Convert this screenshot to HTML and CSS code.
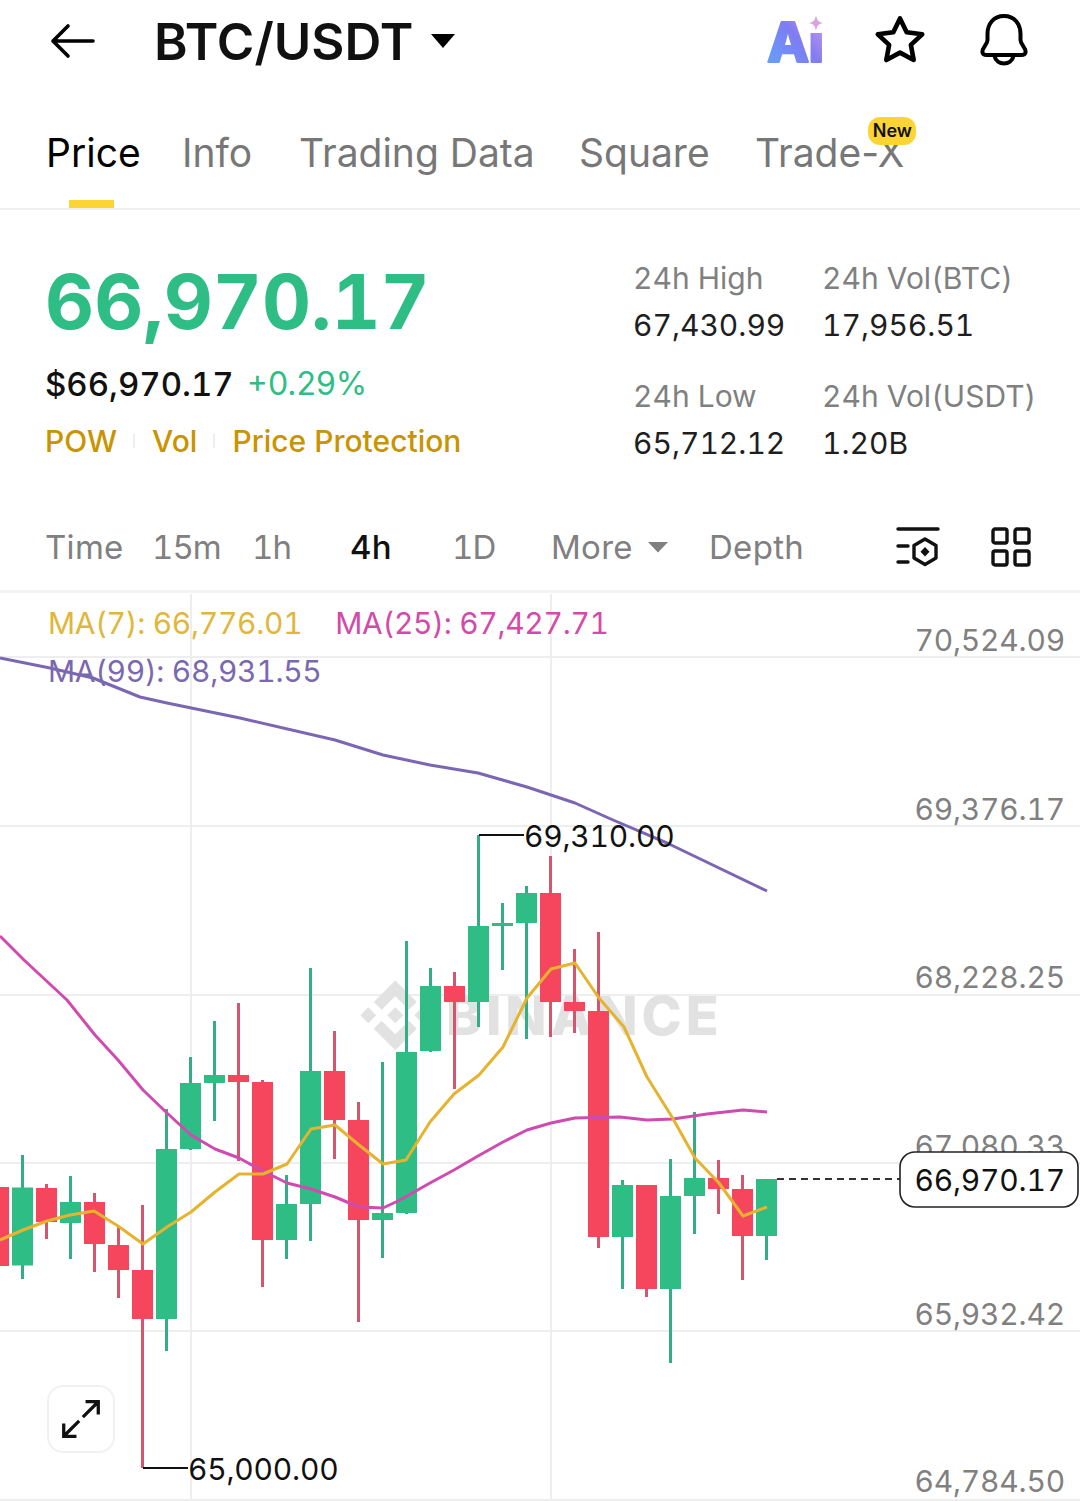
FILE: index.html
```html
<!DOCTYPE html>
<html lang="en">
<head>
  <meta charset="UTF-8">
  <meta name="viewport" content="width=device-width, initial-scale=1.0">
  <link rel="stylesheet" href="styles.css">
  <title>BTC/USDT</title>
</head>
<body>
  <div id="app">
    <header class="topbar">
      <svg class="icon-back" viewBox="0 0 46 38"><path d="M3 19H43M18 4 3 19 18 34"/></svg>
      <h1 class="pair">BTC/USDT</h1>
      <svg class="icon-caret" viewBox="0 0 26 16"><path d="M1 1H25L13 15Z"/></svg>
      <svg class="icon-ai" viewBox="0 -8 64 70">
        <defs>
          <linearGradient id="aiFill" x1="0" y1="1" x2="1" y2="0">
            <stop offset="0" stop-color="#5fa8ff"/>
            <stop offset="0.55" stop-color="#7f7cf2"/>
            <stop offset="1" stop-color="#d59ce8"/>
          </linearGradient>
        </defs>
        <text class="ai-text" x="0" y="48" fill="url(#aiFill)" stroke="url(#aiFill)">Ai</text>
        <rect class="ai-mask" x="38" y="0" width="26" height="19"/>
        <path class="ai-spark" d="M49 1C50 6 51 8 56 9 51 10 50 12 49 17 48 12 47 10 42 9 47 8 48 6 49 1Z"/>
      </svg>
      <svg class="icon-star" viewBox="0 0 52 50"><path d="M26 4 32.2 16.8 46.6 18.8 36.1 28.6 38.7 42.6 26 35.8 13.3 42.6 15.9 28.6 5.4 18.8 19.8 16.8Z"/></svg>
      <svg class="icon-bell" viewBox="0 0 54 56"><path d="M27 3C16.5 3 10.5 11 10.5 21V27C10.5 32 4.5 35 5.5 39.5 6 41.5 7.5 42 9.500 42H44.500C46.500 42 48 41.500 48.500 39.500 49.500 35 43.500 32 43.500 27V21C43.500 11 37.500 3 27 3ZM17.500 43C19.500 53 34.500 53 36.500 43"/></svg>
    </header>

    <nav class="tabs">
      <a class="tab active">Price</a>
      <a class="tab">Info</a>
      <a class="tab">Trading Data</a>
      <a class="tab">Square</a>
      <a class="tab tab-new">Trade-X<span class="badge">New</span></a>
    </nav>

    <section class="summary">
      <div class="price-box">
        <div class="last-price">66,970.17</div>
        <div class="fiat-row"><span class="fiat">$66,970.17</span><span class="change">+0.29%</span></div>
        <div class="tags">
          <span>POW</span><i class="tag-sep"></i><span>Vol</span><i class="tag-sep"></i><span>Price Protection</span>
        </div>
      </div>
      <div class="stats">
        <div class="stat"><div class="stat-label">24h High</div><div class="stat-value">67,430.99</div></div>
        <div class="stat"><div class="stat-label">24h Vol(BTC)</div><div class="stat-value">17,956.51</div></div>
        <div class="stat"><div class="stat-label">24h Low</div><div class="stat-value">65,712.12</div></div>
        <div class="stat"><div class="stat-label">24h Vol(USDT)</div><div class="stat-value">1.20B</div></div>
      </div>
    </section>

    <div class="periods">
      <span>Time</span>
      <span class="num">15m</span>
      <span class="num">1h</span>
      <span class="current">4h</span>
      <span class="num">1D</span>
      <span class="more">More<svg class="icon-more" viewBox="0 0 20 12"><path d="M0 1H20L10 11.500Z"/></svg></span>
      <span>Depth</span>
      <svg class="icon-settings" viewBox="0 0 44 42">
        <path d="M2 3H42M2 20H12M2 36H12"/>
        <path d="M29 13 40 19.500V32L29 38.500 18 32V19.500Z"/>
        <path class="fill" d="M29 21 33.500 25.700 29 30.500 24.500 25.700Z"/>
      </svg>
      <svg class="icon-layout" viewBox="0 0 42 42">
        <rect x="3" y="3" width="14" height="14" rx="2"/>
        <rect x="25" y="3" width="14" height="14" rx="2"/>
        <rect x="3" y="25" width="14" height="14" rx="2"/>
        <rect x="25" y="25" width="14" height="14" rx="2"/>
      </svg>
    </div>

    <section class="chart">
      <svg class="chart-svg" viewBox="0 592 1080 909">
        <path class="grid" d="M0 657H1080M0 826H1080M0 994.500H1080M0 1163H1080M0 1331H1080M0 1499.500H1080M190.500 594V1500M550.500 594V1500"/>

        <g class="watermark">
          <path transform="translate(360 980) scale(.56)" d="M38.730 53.200 63 28.940 87.280 53.220 101.400 39.100 63 .7 24.610 39.090ZM.7 63 14.820 48.880 28.940 63 14.820 77.120ZM38.730 72.800 63 97.060 87.280 72.780 101.410 86.880 63 125.300 24.610 86.910ZM97.060 63 111.180 48.880 125.300 63 111.180 77.120ZM77.320 62.990 63 48.670 48.680 62.980 63 77.320Z"/>
          <text x="446" y="1035">BINANCE</text>
        </g>

        <g class="candles">
          <path class="wick down" d="M-1.500 1173V1280"/><rect class="body down" x="-12" y="1187" width="21" height="79"/>
          <path class="wick up" d="M22.500 1155V1279"/><rect class="body up" x="12" y="1187.500" width="21" height="78"/>
          <path class="wick down" d="M46.500 1184V1239"/><rect class="body down" x="36" y="1188" width="21" height="34"/>
          <path class="wick up" d="M70.500 1176V1259"/><rect class="body up" x="60" y="1202" width="21" height="21"/>
          <path class="wick down" d="M94.500 1193V1272"/><rect class="body down" x="84" y="1202" width="21" height="42"/>
          <path class="wick down" d="M118.500 1227V1298"/><rect class="body down" x="108" y="1245" width="21" height="25"/>
          <path class="wick down" d="M142.500 1205V1468"/><rect class="body down" x="132" y="1270" width="21" height="49"/>
          <path class="wick up" d="M166.500 1109V1351"/><rect class="body up" x="156" y="1149" width="21" height="170"/>
          <path class="wick up" d="M190.500 1057V1150"/><rect class="body up" x="180" y="1083" width="21" height="66"/>
          <path class="wick up" d="M214.500 1021V1121"/><rect class="body up" x="204" y="1075" width="21" height="8"/>
          <path class="wick down" d="M238.500 1003V1161"/><rect class="body down" x="228" y="1075" width="21" height="7"/>
          <path class="wick down" d="M262.500 1080V1287"/><rect class="body down" x="252" y="1082" width="21" height="158"/>
          <path class="wick up" d="M286.500 1175V1259"/><rect class="body up" x="276" y="1204" width="21" height="36"/>
          <path class="wick up" d="M310.500 968V1241"/><rect class="body up" x="300" y="1071" width="21" height="133"/>
          <path class="wick down" d="M334.500 1031V1159"/><rect class="body down" x="324" y="1071" width="21" height="49"/>
          <path class="wick down" d="M358.500 1102V1322"/><rect class="body down" x="348" y="1120" width="21" height="100"/>
          <path class="wick up" d="M382.500 1062V1258"/><rect class="body up" x="372" y="1213" width="21" height="7"/>
          <path class="wick up" d="M406.500 941V1214"/><rect class="body up" x="396" y="1052" width="21" height="161"/>
          <path class="wick up" d="M430.500 968V1052"/><rect class="body up" x="420" y="986" width="21" height="65"/>
          <path class="wick down" d="M454.500 972V1089"/><rect class="body down" x="444" y="986" width="21" height="16"/>
          <path class="wick up" d="M478.500 835V1027"/><rect class="body up" x="468" y="926" width="21" height="76"/>
          <path class="wick up" d="M502.500 903V970"/><rect class="body up" x="492" y="923" width="21" height="3"/>
          <path class="wick up" d="M526.500 886V1039"/><rect class="body up" x="516" y="893" width="21" height="30"/>
          <path class="wick down" d="M550.500 856V1037"/><rect class="body down" x="540" y="893" width="21" height="109"/>
          <path class="wick down" d="M574.500 949V1033"/><rect class="body down" x="564" y="1002" width="21" height="9"/>
          <path class="wick down" d="M598.500 932V1248"/><rect class="body down" x="588" y="1011" width="21" height="226"/>
          <path class="wick up" d="M622.500 1180V1289"/><rect class="body up" x="612" y="1185" width="21" height="52"/>
          <path class="wick down" d="M646.500 1185V1297"/><rect class="body down" x="636" y="1185" width="21" height="104"/>
          <path class="wick up" d="M670.500 1159V1363"/><rect class="body up" x="660" y="1196" width="21" height="93"/>
          <path class="wick up" d="M694.500 1112V1234"/><rect class="body up" x="684" y="1178" width="21" height="18"/>
          <path class="wick down" d="M718.500 1160V1214"/><rect class="body down" x="708" y="1178" width="21" height="11"/>
          <path class="wick down" d="M742.500 1175V1280"/><rect class="body down" x="732" y="1189" width="21" height="47"/>
          <path class="wick up" d="M766.500 1179V1260"/><rect class="body up" x="756" y="1179" width="21" height="57"/>
        </g>

        <polyline class="ma ma99" points="0,658 50,668 93,678 140,697 167,703 240,718 335,740 383,755 430,765 478,773 527,787 575,803 613,820 667,843 767,891"/>
        <polyline class="ma ma25" points="0,936 24,960 67,1000 95,1035 118,1060 143,1090 167,1113 191,1135 215,1149 239,1158 263,1171 287,1183 311,1189 335,1197 359,1207 383,1208 400,1200 430,1183 454,1170 478,1156 503,1142 527,1130 551,1123 575,1118 620,1117 647,1120 673,1119 707,1114 743,1110 767,1112"/>
        <polyline class="ma ma7" points="0,1240 23,1230 47,1221 70,1215 94,1211 118,1226 143,1244 167,1227 191,1212 215,1192 239,1174 263,1174 287,1164 311,1129 335,1125 359,1145 383,1164 406,1160 430,1122 454,1094 479,1075 503,1047 527,998 551,969 575,963 599,998 624,1027 647,1077 672,1117 695,1158 719,1183 743,1216 767,1207"/>

        <path class="marker" d="M479 835H524M143 1468H188"/>
        <text class="extreme" x="524" y="847">69,310.00</text>
        <text class="extreme" x="188" y="1480">65,000.00</text>

        <text class="axis" x="1065" y="651">70,524.09</text>
        <text class="axis" x="1065" y="820">69,376.17</text>
        <text class="axis" x="1065" y="988">68,228.25</text>
        <text class="axis" x="1065" y="1157">67,080.33</text>
        <text class="axis" x="1065" y="1325">65,932.42</text>
        <text class="axis" x="1065" y="1492">64,784.50</text>

        <path class="last-line" d="M777 1179H900"/>
        <rect class="last-tag" x="900" y="1152" width="178" height="55" rx="15"/>
        <text class="axis last-text" x="1065" y="1191">66,970.17</text>
      </svg>

      <div class="legend">
        <span class="l7">MA(7): 66,776.01</span>
        <span class="l25">MA(25): 67,427.71</span>
        <span class="l99">MA(99): 68,931.55</span>
      </div>

      <button class="expand">
        <svg viewBox="0 0 44 44"><path d="M27 3H41V17M41 3 24 20M3 27V41H17M3 41 20 24"/></svg>
      </button>
    </section>
  </div>
</body>
</html>
```

FILE: styles.css
```css
* {
  box-sizing: border-box;
}

body {
  font-family: 'Inter', 'Liberation Sans', sans-serif;
  font-variant-numeric: tabular-nums;
  background-color: #fff;
  color: #111;
  margin: 0;
  overflow: hidden;
}

#app {
  width: 1080px;
  height: 1501px;
  overflow: hidden;
}

/* top bar */
.topbar {
  display: flex;
  align-items: center;
  height: 82px;
  padding: 0 49px 0 50px;
}

.topbar svg {
  flex: none;
  fill: none;
  stroke: #000;
  stroke-linecap: round;
  stroke-linejoin: round;
}

.icon-back {
  width: 46px;
  height: 38px;
  stroke-width: 3.6;
}

.pair {
  margin: 0 0 0 58px;
  font-size: 51px;
  font-weight: 600;
}

.topbar .icon-caret {
  width: 26px;
  height: 16px;
  margin-left: 17px;
  fill: #000;
  stroke: none;
}

.topbar .icon-ai {
  width: 64px;
  height: 70px;
  margin-left: auto;
  stroke-width: 2;
}

.ai-text {
  font-size: 55px;
  font-weight: 800;
  letter-spacing: -1px;
}

.topbar .ai-mask {
  fill: #fff;
  stroke: none;
}

.topbar .ai-spark {
  fill: #d9a2e0;
  stroke: none;
}

.topbar .icon-star {
  width: 56px;
  height: 54px;
  margin-left: 41px;
  stroke-width: 4.300;
}

.topbar .icon-bell {
  width: 54px;
  height: 56px;
  margin-left: 49px;
  stroke-width: 4;
}

/* tabs */
.tabs {
  display: grid;
  grid-template-columns: 136px 117px 280px 176px auto;
  height: 128px;
  padding: 48px 0 0 46px;
  border-bottom: 2px solid #f0f0f0;
  font-variant-numeric: normal;
}

.tab {
  position: relative;
  justify-self: start;
  height: 46px;
  font-size: 39px;
  line-height: 46px;
  color: #777;
}

.tab.active {
  color: #000;
}

.tab.active::after {
  content: "";
  position: absolute;
  left: 23px;
  top: 70px;
  width: 45px;
  height: 8px;
  background-color: #fcd535;
}

.badge {
  position: absolute;
  right: -12px;
  top: -13px;
  width: 48px;
  height: 28px;
  border-radius: 12px;
  background-color: #fcd535;
  color: #111;
  font-size: 18px;
  font-weight: 600;
  line-height: 27px;
  text-align: center;
}

/* price summary */
.summary {
  display: flex;
  justify-content: space-between;
  height: 291px;
  padding: 46px 0 0 45px;
}

.last-price {
  font-size: 76px;
  font-weight: 700;
  line-height: 90px;
  color: #2ebd85;
}

.fiat-row {
  display: flex;
  align-items: center;
  gap: 13px;
  margin-top: 15px;
  font-size: 33px;
  line-height: 46px;
}

.fiat {
  font-weight: 500;
}

.change {
  font-size: 32px;
  font-variant-numeric: normal;
  color: #2ebd85;
}

.tags {
  display: flex;
  align-items: center;
  margin-top: 14px;
  font-size: 30px;
  font-weight: 500;
  line-height: 40px;
  color: #c99400;
}

.tag-sep {
  width: 2px;
  height: 14px;
  margin: 0 17px 0 16px;
  background-color: #eee;
}

.stats {
  display: grid;
  grid-template-columns: 189px 258px;
  grid-auto-rows: 118px;
  margin-top: -1px;
}

.stat-label {
  font-size: 30px;
  line-height: 46px;
  color: #808080;
}

.stat-value {
  margin-top: 1px;
  font-size: 30px;
  line-height: 46px;
  color: #1e1e1e;
}

/* period switcher */
.periods {
  display: grid;
  grid-template-columns: 107px 100px 98px 102px 99px 158px 187px 94px 42px;
  align-items: center;
  height: 92px;
  margin-bottom: -1px;
  padding: 3px 0 0 45px;
  border-bottom: 3px solid #f3f3f3;
  font-size: 33px;
  letter-spacing: 0.3px;
  color: #808080;
}

.periods .num {
  letter-spacing: -1px;
}

.periods .current {
  color: #111;
  font-weight: 500;
}

.more {
  display: flex;
  align-items: center;
}

.icon-more {
  width: 20px;
  height: 12px;
  margin-left: 15px;
  fill: #808080;
}

.icon-settings,
.icon-layout {
  fill: none;
  stroke: #111;
  stroke-width: 3.4;
  stroke-linecap: round;
  stroke-linejoin: round;
}

.icon-settings {
  width: 44px;
  height: 42px;
}

.icon-layout {
  width: 42px;
  height: 42px;
}

.icon-settings .fill {
  fill: #111;
  stroke: none;
}

/* chart */
.chart {
  position: relative;
  height: 909px;
}

.chart-svg {
  display: block;
  width: 1080px;
  height: 909px;
}

.grid {
  fill: none;
  stroke: #eeeeee;
  stroke-width: 2;
}

.grid,
.marker {
  shape-rendering: crispEdges;
}

.watermark {
  fill: #e2e2e2;
}

.watermark text {
  font-size: 54px;
  font-weight: 800;
  letter-spacing: 4px;
}

.wick {
  fill: none;
  stroke-width: 3;
}

.wick.up {
  stroke: #35ad84;
}

.wick.down {
  stroke: #d4566e;
}

.body.up {
  fill: #2ebd85;
}

.body.down {
  fill: #f6465d;
}

.ma {
  fill: none;
  stroke-width: 3;
  stroke-linejoin: round;
}

.ma7 {
  stroke: #e6b32f;
}

.ma25 {
  stroke: #d04bb0;
}

.ma99 {
  stroke: #7a66b3;
}

.marker {
  fill: none;
  stroke: #111;
  stroke-width: 2;
}

.extreme {
  font-size: 30px;
  letter-spacing: -0.2px;
  fill: #111;
}

.axis {
  font-size: 30px;
  letter-spacing: -0.2px;
  fill: #808080;
  text-anchor: end;
}

.last-line {
  fill: none;
  stroke: #333;
  stroke-width: 2;
  stroke-dasharray: 7 5;
}

.last-tag {
  fill: #fff;
  stroke: #222;
  stroke-width: 1.6;
}

.axis.last-text {
  fill: #111;
}

.legend {
  position: absolute;
  left: 48px;
  top: 7px;
  display: flex;
  flex-wrap: wrap;
  column-gap: 33px;
  width: 600px;
  font-size: 30px;
  letter-spacing: -0.3px;
  line-height: 48px;
}

.l7 {
  color: #e0b73a;
}

.l25 {
  color: #d34aa8;
}

.l99 {
  color: #7a68b0;
}

.expand {
  position: absolute;
  left: 47px;
  top: 793px;
  width: 68px;
  height: 68px;
  padding: 12px;
  border: 2px solid #f1f1f1;
  border-radius: 16px;
  background-color: #fff;
}

.expand svg {
  display: block;
  width: 40px;
  height: 40px;
  fill: none;
  stroke: #111;
  stroke-width: 3.6;
}
```
